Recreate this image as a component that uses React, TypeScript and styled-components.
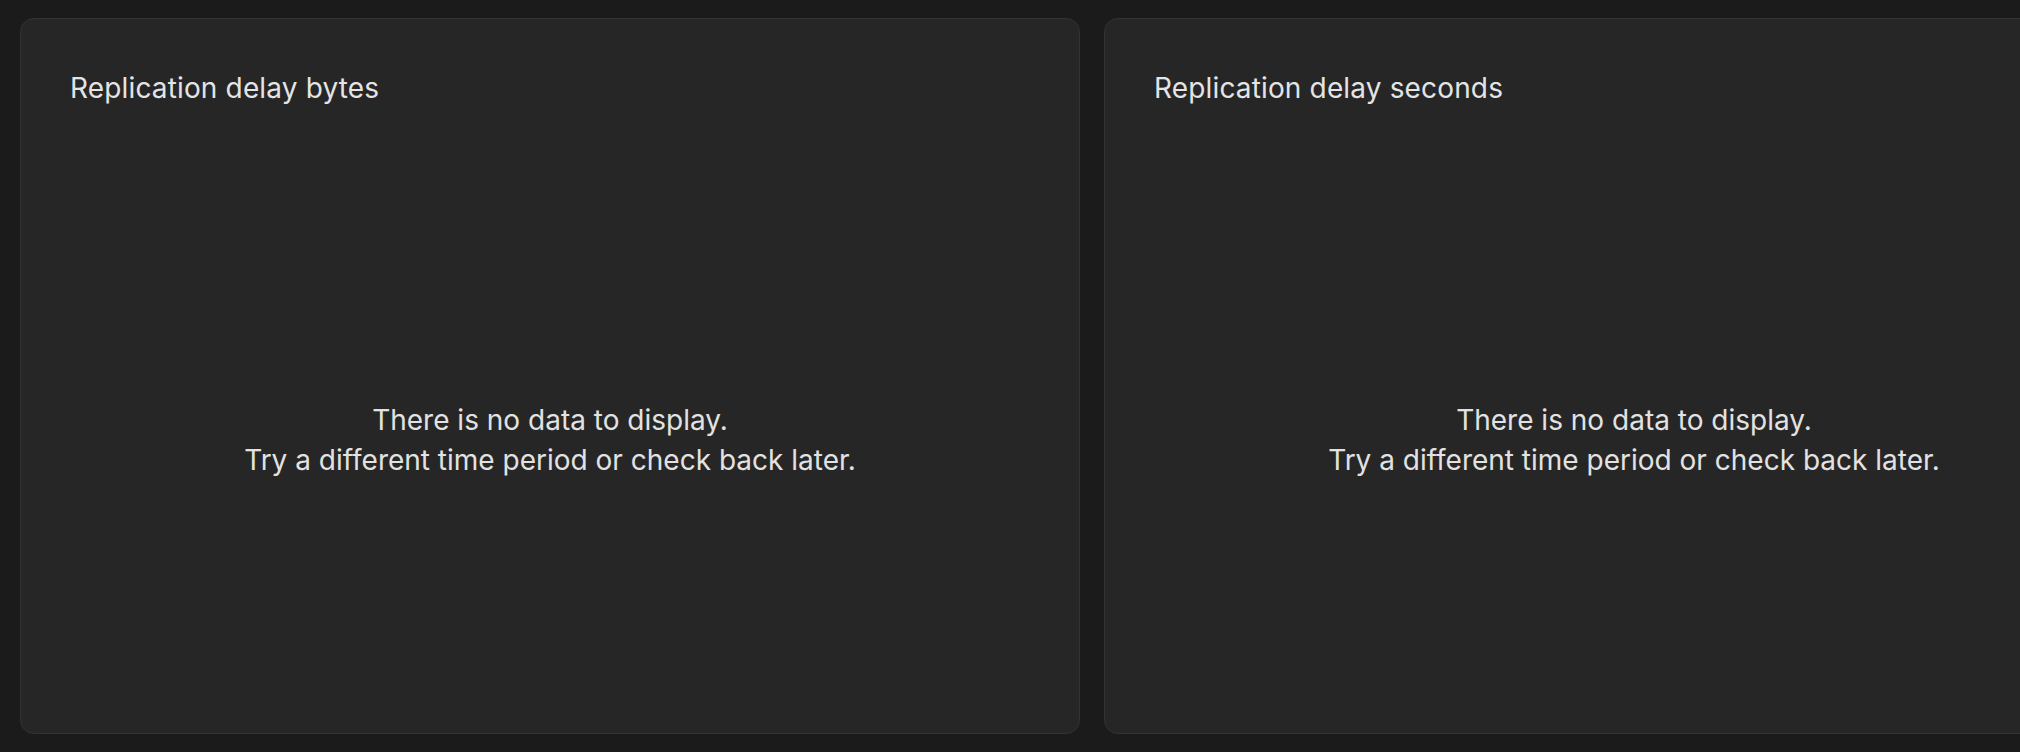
import React from 'react';
import styled, { createGlobalStyle } from 'styled-components';

const GlobalStyle = createGlobalStyle`
  html, body {
    margin: 0;
    padding: 0;
    background: #1b1b1b;
    font-family: Inter, "Noto Sans", sans-serif;
    color: #e2e2e2;
    overflow: hidden;
  }
`;

const Page = styled.div`
  width: 2020px;
  height: 752px;
  box-sizing: border-box;
  padding: 18px 20px;
  overflow: hidden;
  display: grid;
  grid-template-columns: 1060px 1060px;
  gap: 24px;
`;

const Card = styled.section`
  box-sizing: border-box;
  height: 716px;
  background: #262626;
  border: 1px solid #333333;
  border-radius: 14px;
  padding: 52px 49px 0;
  display: flex;
  flex-direction: column;
`;

const Title = styled.h3`
  margin: 0;
  font-size: 28px;
  line-height: 34px;
  font-weight: 400;
  letter-spacing: 0.15px;
  color: #e4e4e4;
`;

const Empty = styled.div`
  flex: 1;
  display: flex;
  align-items: center;
  justify-content: center;
  padding-top: 42px;
  text-align: center;
  font-size: 28px;
  line-height: 40px;
  color: #e2e2e2;
`;

const charts = ['Replication delay bytes', 'Replication delay seconds'];

export default function App() {
  return (
    <>
      <GlobalStyle />
      <Page>
        {charts.map((name) => (
          <Card key={name}>
            <Title>{name}</Title>
            <Empty>
              <div>
                There is no data to display.
                <br />
                Try a different time period or check back later.
              </div>
            </Empty>
          </Card>
        ))}
      </Page>
    </>
  );
}
